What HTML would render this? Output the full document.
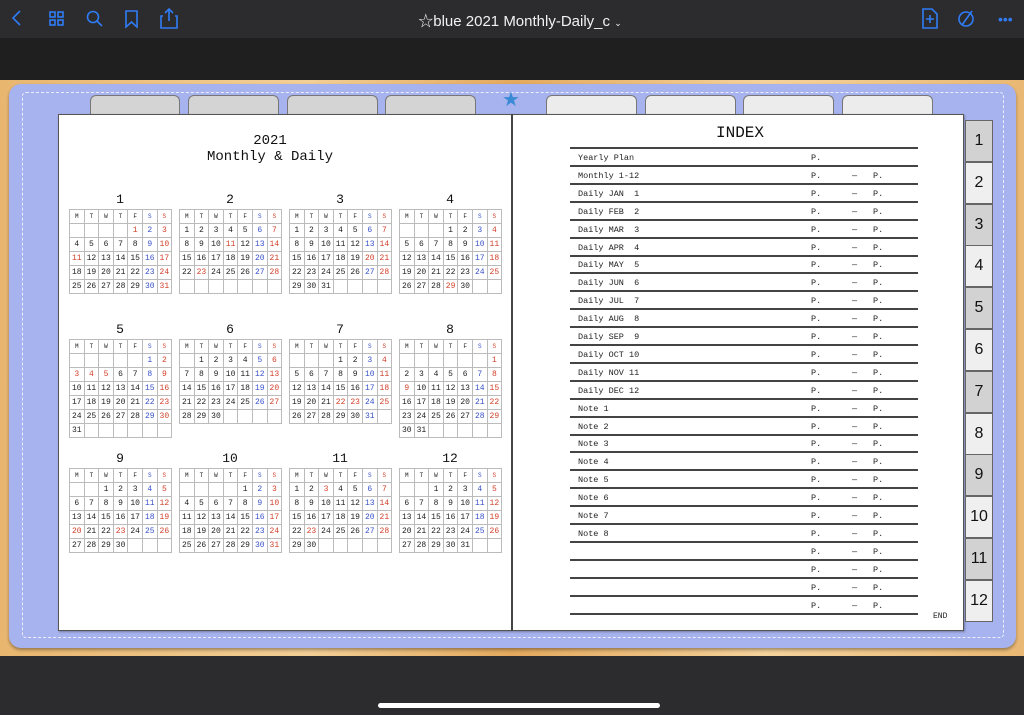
<!DOCTYPE html>
<html><head><meta charset="utf-8"><style>
*{margin:0;padding:0;box-sizing:border-box}
body{width:1024px;height:715px;overflow:hidden;background:#1e1e1e;font-family:"Liberation Mono","Noto Sans CJK JP",monospace;position:relative}
.abs{position:absolute}
#top{left:0;top:0;width:1024px;height:38px;background:#2c2c2e}
#mid{left:0;top:38px;width:1024px;height:42px;background:#1f1f1f}
#wood{left:0;top:80px;width:1024px;height:576px;background:linear-gradient(90deg,#e8b66f,#f2cf96 30%,#e3a95e 50%,#f4d29b 75%,#e9b873)}
#bot{left:0;top:656px;width:1024px;height:59px;background:#2c2c2e}
#cover{left:9px;top:84px;width:1007px;height:564px;border-radius:12px;background:#a7b3ee;box-shadow:0 2px 3px rgba(0,0,0,.35)}
#stitch{left:22px;top:92px;width:982px;height:546px;border:1px dashed #eef;border-radius:4px}
.tab{height:20px;top:95px;border:1px solid #777;border-bottom:none;border-radius:6px 6px 0 0;background:#d4d4d4}
.tab.w{background:#ececec}
.page{top:114px;height:517px;background:#fff;border:1px solid #555;box-shadow:1px 1px 2px rgba(0,0,0,.3)}
.rt{left:965px;width:28px;height:42px;background:#d2d2d2;border:1px solid #666;font-family:"Liberation Sans",sans-serif;font-size:16px;text-align:center;line-height:40px;color:#111}
.rt.w{background:#efefef}
.cal{position:absolute;border-collapse:collapse;font-size:8px;color:#222}
.cal td{border:1px solid #bbb;width:14.6px;height:14px;text-align:center;padding:0}
.cal tr:first-child td{font-size:6px;height:14px}
.r{color:#d2402a}.b{color:#3952c9}
.mt{position:absolute;font-size:13px;width:100px;text-align:center;color:#111}
.row{position:absolute;left:570px;width:348px;height:18px;border-bottom:2px solid #444;font-size:8.5px;color:#222}
.row span{position:absolute;top:4px}
</style></head><body>
<div id="top" class="abs"></div>
<div id="mid" class="abs"></div>
<div id="wood" class="abs"></div>
<div id="bot" class="abs"></div>
<div class="abs" style="left:378px;top:703px;width:282px;height:5px;border-radius:3px;background:#fff"></div>
<svg class="abs" style="left:0;top:0" width="1024" height="38" fill="none" stroke="#2f7cf6" stroke-width="1.6">
<path d="M20 11 L13 18 L20 25"/>
<rect x="50" y="12" width="5" height="5"/><rect x="58" y="12" width="5" height="5"/><rect x="50" y="20" width="5" height="5"/><rect x="58" y="20" width="5" height="5"/>
<circle cx="93" cy="17" r="5.5"/><path d="M97 21 L102 26"/>
<path d="M126 11 H137 V27 L131.5 22 L126 27 Z"/>
<path d="M163 16 H161 V28 H177 V16 H175 M169 21 V9 M165 13 L169 9 L173 13"/>
<path d="M923 9 H932 L937 14 V28 H923 Z M930 15 V23 M926 19 H934"/>
<circle cx="966" cy="19" r="7"/><path d="M962 25 L972 11"/>
</svg>
<div class="abs" style="left:998px;top:17px;color:#2f7cf6;font-size:14px;line-height:4px;font-family:'Liberation Sans'">•••</div>
<div class="abs" style="left:380px;top:10px;width:280px;text-align:center;color:#f2f2f2;font-family:'Liberation Sans','Noto Sans CJK JP',sans-serif;font-size:15px">☆blue 2021 Monthly-Daily_c <span style="font-size:9px">⌄</span></div>
<div id="cover" class="abs"></div>
<div id="stitch" class="abs"></div>
<div class="tab abs" style="left:90px;width:90px"></div>
<div class="tab abs" style="left:188px;width:91px"></div>
<div class="tab abs" style="left:287px;width:91px"></div>
<div class="tab abs" style="left:385px;width:91px"></div>
<div class="tab w abs" style="left:546px;width:91px"></div>
<div class="tab w abs" style="left:645px;width:91px"></div>
<div class="tab w abs" style="left:743px;width:91px"></div>
<div class="tab w abs" style="left:842px;width:91px"></div>
<div class="abs" style="left:502px;top:87px;color:#3a8ad6;font-size:20px;font-family:'DejaVu Sans'">★</div>
<div class="page abs" style="left:58px;width:454px"></div>
<div class="page abs" style="left:512px;width:452px"></div>
<div class="abs" style="left:511px;top:114px;width:2px;height:517px;background:#444"></div>
<div class="abs" style="left:200px;top:133px;width:140px;text-align:center;font-size:14px;line-height:16px;color:#111">2021<br>Monthly &amp; Daily</div>
<div class="abs" style="left:690px;top:124px;width:100px;text-align:center;font-size:16px;color:#111">INDEX</div>
<div class="abs" style="left:933px;top:612px;font-size:8px;color:#222">END</div>
<div id="rtabs"></div>
<div id="cals"></div>
<div id="idx"></div>
<script>
var hol={1:[1,11],2:[11,23],3:[20],4:[29],5:[3,4,5],7:[22,23],8:[9],9:[20,23],11:[3,23]};
var dim=[31,28,31,30,31,30,31,31,30,31,30,31];
var xs=[69,179,289,399],ys=[209,339,468],h='';
for(var m=1;m<=12;m++){
 var c=(m-1)%4,r=Math.floor((m-1)/4),x=xs[c],y=ys[r];
 h+='<div class="mt" style="left:'+(x+1)+'px;top:'+(y-17)+'px">'+m+'</div>';
 var off=(new Date(2021,m-1,1).getDay()+6)%7;
 var t='<table class="cal" style="left:'+x+'px;top:'+y+'px"><tr><td>M</td><td>T</td><td>W</td><td>T</td><td>F</td><td class="b">S</td><td class="r">S</td></tr>';
 var d=1-off;
 for(var w=0;w<6;w++){t+='<tr>';for(var k=0;k<7;k++){var v='';var cl='';
  if(d>=1&&d<=dim[m-1]){v=d;if(k==6||(hol[m]&&hol[m].indexOf(d)>=0))cl='r';else if(k==5)cl='b';}
  t+='<td class="'+cl+'">'+v+'</td>';d++;}t+='</tr>';if(d>dim[m-1]&&w>=4)break;}
 h+=t+'</table>';
}
document.getElementById('cals').innerHTML=h;
var names=['Yearly Plan','Monthly 1-12','Daily JAN  1','Daily FEB  2','Daily MAR  3','Daily APR  4','Daily MAY  5','Daily JUN  6','Daily JUL  7','Daily AUG  8','Daily SEP  9','Daily OCT 10','Daily NOV 11','Daily DEC 12','Note 1','Note 2','Note 3','Note 4','Note 5','Note 6','Note 7','Note 8','','','',''];
var s='<div class="abs" style="left:570px;top:147px;width:348px;height:2px;background:#444"></div>';
for(var i=0;i<26;i++){var y=149+i*17.9;
 s+='<div class="row" style="top:'+y+'px"><span style="left:8px;white-space:pre">'+names[i]+'</span><span style="left:241px">P.</span>'+(i>0?'<span style="left:282px">—</span><span style="left:303px">P.</span>':'')+'</div>';}
document.getElementById('idx').innerHTML=s;
var rt='';for(var i=0;i<12;i++){rt+='<div class="rt abs'+(i%2?' w':'')+'" style="top:'+(120+i*41.8)+'px">'+(i+1)+'</div>';}
document.getElementById('rtabs').innerHTML=rt;
</script>
</body></html>
